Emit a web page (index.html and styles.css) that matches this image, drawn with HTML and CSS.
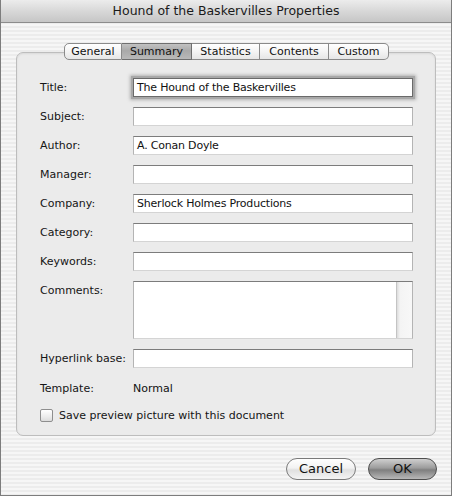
FILE: index.html
```html
<!DOCTYPE html>
<html>
<head>
<meta charset="utf-8">
<link rel="stylesheet" href="styles.css">
</head>
<body>
<div class="window">
  <div class="titlebar">Hound of the Baskervilles Properties</div>
  <div class="content">
    <div class="tabs">
      <div class="tab t-general">General</div>
      <div class="tab t-summary selected">Summary</div>
      <div class="tab t-statistics">Statistics</div>
      <div class="tab t-contents">Contents</div>
      <div class="tab t-custom">Custom</div>
    </div>
    <div class="groupbox">
      <div class="form">
        <div class="label">Title:</div><div class="field focused">The Hound of the Baskervilles</div>
        <div class="label">Subject:</div><div class="field"></div>
        <div class="label">Author:</div><div class="field">A. Conan Doyle</div>
        <div class="label">Manager:</div><div class="field"></div>
        <div class="label">Company:</div><div class="field">Sherlock Holmes Productions</div>
        <div class="label">Category:</div><div class="field"></div>
        <div class="label">Keywords:</div><div class="field"></div>
        <div class="label">Comments:</div><div class="field area"><div class="scrolltrack"></div></div>
        <div class="label">Hyperlink base:</div><div class="field"></div>
        <div class="label tpl">Template:</div><div class="value tpl">Normal</div>
      </div>
      <div class="check-row">
        <span class="checkbox"></span>
        <span class="check-label">Save preview picture with this document</span>
      </div>
    </div>
    <div class="buttons">
      <div class="btn cancel">Cancel</div>
      <div class="btn ok">OK</div>
    </div>
  </div>
</div>
</body>
</html>
```

FILE: styles.css
```css
* { box-sizing: border-box; }
html, body { margin: 0; padding: 0; }
body {
  width: 452px;
  height: 496px;
  font-family: "DejaVu Sans", "Liberation Sans", sans-serif;
  font-size: 11px;
  color: #111;
  background: #fff;
}
.window {
  width: 452px;
  height: 496px;
  border: 1px solid #7d7d7d;
  border-top: none;
  background: repeating-linear-gradient(to bottom, #f6f6f6 0px, #f6f6f6 2px, #ececec 2px, #ececec 4px);
  display: flex;
  flex-direction: column;
}
.titlebar {
  height: 23px;
  border-bottom: 1px solid #8c8c8c;
  background: linear-gradient(to bottom, #ececec 0%, #d8d8d8 50%, #c6c6c6 100%);
  text-align: center;
  font-size: 12.5px;
  line-height: 22px;
  color: #1a1a1a;
}
.content {
  padding: 20px 14px 0 15px;
  display: flex;
  flex-direction: column;
}
.tabs {
  display: flex;
  margin-left: 48px;
  height: 17px;
  position: relative;
  z-index: 2;
  align-self: flex-start;
}
.tab {
  height: 17px;
  line-height: 15px;
  text-align: center;
  border: 1px solid #8a8a8a;
  border-left: none;
  background: linear-gradient(to bottom, #ffffff 0%, #f4f4f4 50%, #e6e6e6 100%);
  color: #111;
}
.t-general { width: 58px; border-left: 1px solid #8a8a8a; border-radius: 5px 0 0 5px; }
.t-summary { width: 70px; }
.t-statistics { width: 68px; }
.t-contents { width: 69px; }
.t-custom { width: 60px; border-radius: 0 5px 5px 0; }
.tab.selected {
  background: linear-gradient(to bottom, #c2c2c2 0%, #a9a9a9 45%, #b9b9b9 100%);
  border-color: #6f6f6f;
}
.groupbox {
  margin-top: -8px;
  width: 420px;
  height: 384px;
  border: 1px solid #bdbdbd;
  border-radius: 7px;
  background: #ebebeb;
  padding: 25px 22px 0 23px;
  box-shadow: inset 0 1px 2px rgba(0,0,0,0.08);
}
.form {
  display: grid;
  grid-template-columns: 93px 280px;
  grid-auto-rows: auto;
  row-gap: 10px;
}
.label {
  line-height: 19px;
  white-space: nowrap;
  color: #151515;
  align-self: start;
}
.field {
  height: 19px;
  background: #fff;
  border: 1px solid #b4b4b4;
  border-top-color: #7c7c7c;
  border-bottom-color: #d4d4d4;
  padding: 0 3px;
  line-height: 17px;
  white-space: nowrap;
  color: #111;
  letter-spacing: -0.2px;
}
.field.focused {
  border: 1px solid #6a6a6a;
  box-shadow: 0 0 0 2px #a8a8a8, 0 0 3px 3px rgba(120,120,120,0.5);
}
.form .area {
  height: 58px;
  position: relative;
}
.scrolltrack {
  position: absolute;
  right: 0;
  top: 0;
  bottom: 0;
  width: 16px;
  background: linear-gradient(to right, #dcdcdc 0, #f4f4f4 3px, #f8f8f8 100%);
  border-left: 1px solid #c4c4c4;
}
.value { line-height: 19px; }
.tpl { margin-top: 1px; }
.check-row {
  display: flex;
  align-items: center;
  margin-top: 10px;
  height: 14px;
}
.checkbox {
  width: 13px;
  height: 13px;
  border: 1px solid #8e8e8e;
  border-radius: 2px;
  background: linear-gradient(to bottom, #ffffff 0%, #ececec 60%, #dcdcdc 100%);
  margin-right: 6px;
}
.check-label { color: #151515; }
.buttons {
  display: flex;
  justify-content: flex-end;
  gap: 12px;
  margin-top: 22px;
}
.btn {
  height: 22px;
  border-radius: 11px;
  text-align: center;
  line-height: 20px;
  font-size: 13px;
  color: #111;
}
.cancel {
  width: 70px;
  border: 1px solid #7a7a7a;
  background: linear-gradient(to bottom, #ffffff 0%, #f2f2f2 45%, #e0e0e0 55%, #f4f4f4 100%);
}
.ok {
  width: 69px;
  border: 1px solid #4e4e4e;
  background: linear-gradient(to bottom, #cfcfcf 0%, #9c9c9c 45%, #7f7f7f 55%, #b8b8b8 100%);
}
```
